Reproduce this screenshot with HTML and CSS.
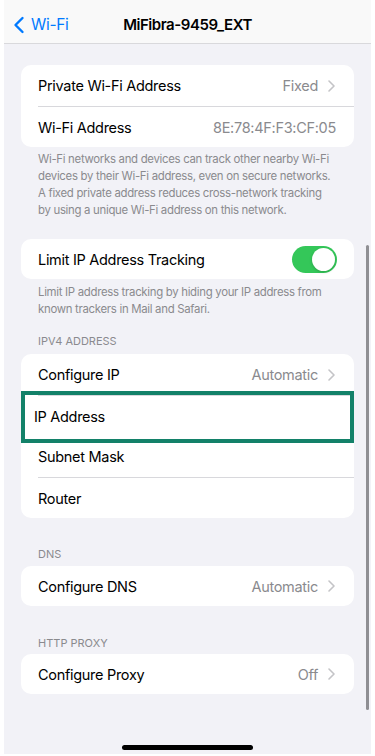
FILE: index.html
```html
<!DOCTYPE html>
<html lang="en">
<head>
<meta charset="utf-8">
<title>MiFibra-9459_EXT</title>
<link rel="stylesheet" href="styles.css">
</head>
<body>
<div class="screen">
  <header class="nav">
    <div class="back">
      <svg class="back-icon" width="12" height="18" viewBox="0 0 12 18"><path d="M9.5 2 L2.5 9 L9.5 16" fill="none" stroke="#007aff" stroke-width="2.4" stroke-linecap="round" stroke-linejoin="round"/></svg>
      <span>Wi-Fi</span>
    </div>
    <div class="title">MiFibra-9459_EXT</div>
    <div></div>
  </header>

  <main class="content">
    <section class="card card-first">
      <div class="row"><span class="label">Private Wi-Fi Address</span><span class="value">Fixed<svg class="chev" width="7" height="12" viewBox="0 0 7 12"><path d="M1 1 L6 6 L1 11" fill="none" stroke="#c4c4c7" stroke-width="1.6" stroke-linecap="round" stroke-linejoin="round"/></svg></span></div>
      <div class="row"><span class="label">Wi-Fi Address</span><span class="value">8E:78:4F:F3:CF:05</span></div>
    </section>
    <p class="footer footer-first">Wi-Fi networks and devices can track other nearby Wi-Fi<br>devices by their Wi-Fi address, even on secure networks.<br>A fixed private address reduces cross-network tracking<br>by using a unique Wi-Fi address on this network.</p>

    <section class="card card-limit">
      <div class="row row-short"><span class="label">Limit IP Address Tracking</span><span class="toggle"><span class="knob"></span></span></div>
    </section>
    <p class="footer footer-second">Limit IP address tracking by hiding your IP address from<br>known trackers in Mail and Safari.</p>

    <h2 class="section-head head-ipv4">IPV4 ADDRESS</h2>
    <section class="card card-ip">
      <div class="row"><span class="label">Configure IP</span><span class="value">Automatic<svg class="chev" width="7" height="12" viewBox="0 0 7 12"><path d="M1 1 L6 6 L1 11" fill="none" stroke="#c4c4c7" stroke-width="1.6" stroke-linecap="round" stroke-linejoin="round"/></svg></span></div>
      <div class="row row-ip"><span class="label label-ip">IP Address</span></div>
      <div class="row row-plain"><span class="label">Subnet Mask</span></div>
      <div class="row"><span class="label">Router</span></div>
      <div class="highlight"></div>
    </section>

    <h2 class="section-head head-dns">DNS</h2>
    <section class="card">
      <div class="row row-short"><span class="label">Configure DNS</span><span class="value">Automatic<svg class="chev" width="7" height="12" viewBox="0 0 7 12"><path d="M1 1 L6 6 L1 11" fill="none" stroke="#c4c4c7" stroke-width="1.6" stroke-linecap="round" stroke-linejoin="round"/></svg></span></div>
    </section>

    <h2 class="section-head head-proxy">HTTP PROXY</h2>
    <section class="card">
      <div class="row row-short"><span class="label">Configure Proxy</span><span class="value">Off<svg class="chev" width="7" height="12" viewBox="0 0 7 12"><path d="M1 1 L6 6 L1 11" fill="none" stroke="#c4c4c7" stroke-width="1.6" stroke-linecap="round" stroke-linejoin="round"/></svg></span></div>
    </section>
  </main>

  <div class="scrollbar"></div>
  <div class="home-indicator"></div>
</div>
</body>
</html>
```

FILE: styles.css
```css
* { box-sizing: border-box; }

html, body {
  margin: 0;
  padding: 0;
  background: #ffffff;
}

body {
  font-family: "Inter", "Roboto", "Liberation Sans", sans-serif;
  -webkit-font-smoothing: antialiased;
}

.screen {
  position: relative;
  width: 367px;
  height: 754px;
  margin-left: 4px;
  background: #f2f2f7;
  overflow: hidden;
}

.nav {
  height: 44px;
  background: #f9f9f9;
  border-bottom: 1px solid #d9d9dc;
  display: grid;
  grid-template-columns: 1fr auto 1fr;
  align-items: center;
  padding-top: 6px;
}

.back {
  display: flex;
  align-items: center;
  gap: 6px;
  padding-left: 9px;
  color: #007aff;
  font-size: 15.5px;
  letter-spacing: -0.3px;
}

.back-icon { display: block; }

.title {
  font-size: 15px;
  font-weight: 600;
  color: #000;
  letter-spacing: -0.45px;
}

.content {
  padding: 21px 17px 0;
}

.card {
  position: relative;
  background: #ffffff;
  border-radius: 10px;
}

.row {
  height: 41px;
  margin-left: 17px;
  padding-right: 18px;
  display: flex;
  align-items: center;
  justify-content: space-between;
  font-size: 14.5px;
  letter-spacing: -0.3px;
  color: #000;
}

.row + .row { border-top: 0.5px solid #d8d8dc; }
.row + .row-plain { border-top: 0; }

.row-short { height: 40px; }

.label-ip { margin-left: -4px; }

.value {
  display: flex;
  align-items: center;
  gap: 10px;
  color: #8a8a8e;
}

.chev { display: block; margin-right: 1px; }

.footer {
  margin: 0;
  padding: 0 17px;
  font-size: 11.4px;
  line-height: 17px;
  color: #8a8a8e;
  letter-spacing: -0.3px;
  white-space: nowrap;
}

.footer-first { margin-top: 4px; }
.card-limit { margin-top: 20px; }
.footer-second { margin-top: 5px; }

.section-head {
  margin: 0;
  padding: 0 17px;
  font-size: 11px;
  line-height: 15px;
  font-weight: 400;
  color: #8a8a8e;
  letter-spacing: 0;
}

.head-ipv4 { margin-top: 16px; margin-bottom: 5px; }
.head-dns { margin-top: 29px; margin-bottom: 4px; }
.head-proxy { margin-top: 30px; margin-bottom: 3px; }

.toggle {
  position: relative;
  width: 45px;
  height: 27px;
  border-radius: 14px;
  background: #34c759;
  margin-right: -1px;
}

.knob {
  position: absolute;
  top: 2px;
  right: 2px;
  width: 23px;
  height: 23px;
  border-radius: 50%;
  background: #fff;
  box-shadow: 0 1px 3px rgba(0,0,0,0.18);
}

.highlight {
  position: absolute;
  left: 0;
  right: 0;
  top: 37px;
  height: 52px;
  border: 4px solid #138169;
}

.scrollbar {
  position: absolute;
  right: 2px;
  top: 245px;
  width: 3px;
  height: 465px;
  border-radius: 2px;
  background: #8f8f93;
}

.home-indicator {
  position: absolute;
  left: 118px;
  top: 745px;
  width: 131px;
  height: 5px;
  border-radius: 3px;
  background: #000;
}
```
